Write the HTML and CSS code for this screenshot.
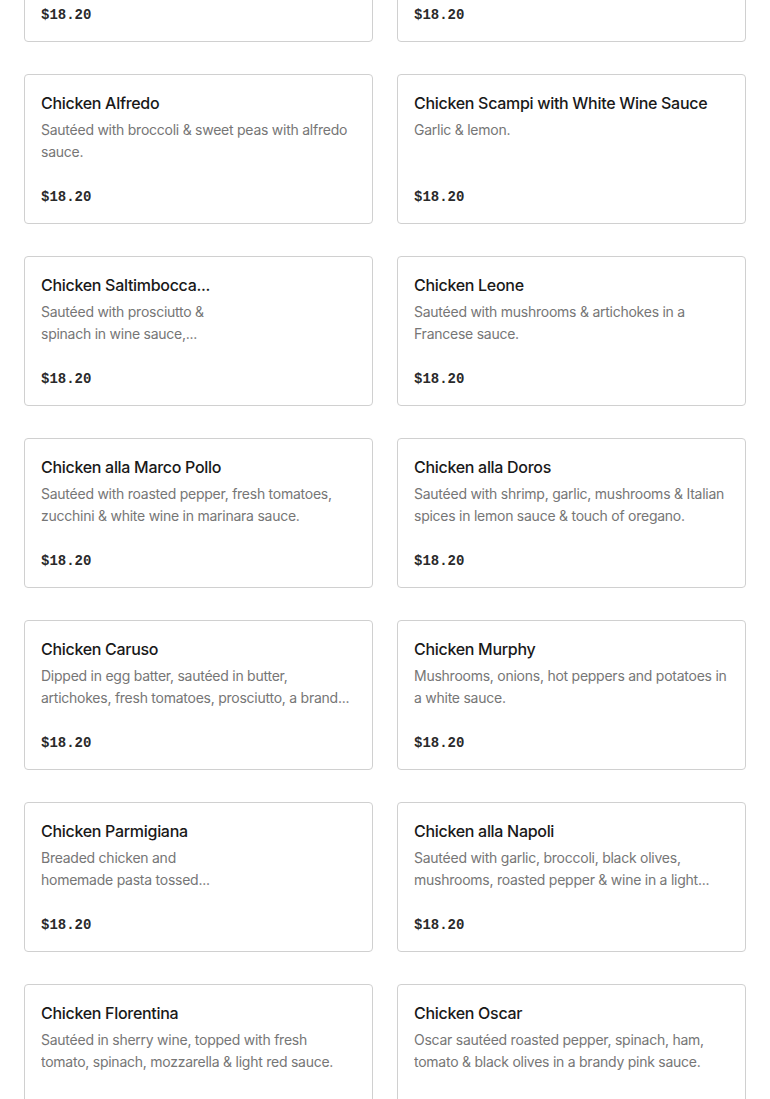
FILE: index.html
```html
<!DOCTYPE html>
<html lang="en">
<head>
<meta charset="utf-8">
<title>Menu</title>
<link rel="stylesheet" href="styles.css">
</head>
<body>
<main class="menu">
  <article class="card">
    <div class="info">
      <h3 class="name">Chicken Francese</h3>
      <p class="desc">Dipped in egg batter &amp; sautéed in lemon butter white wine sauce.</p>
      <div class="price">$18.20</div>
    </div>
  </article>
  <article class="card">
    <div class="info">
      <h3 class="name">Chicken Marsala</h3>
      <p class="desc">Sautéed with mushrooms in Marsala wine sauce.</p>
      <div class="price">$18.20</div>
    </div>
  </article>

  <article class="card">
    <div class="info">
      <h3 class="name">Chicken Alfredo</h3>
      <p class="desc">Sautéed with broccoli &amp; sweet peas with alfredo sauce.</p>
      <div class="price">$18.20</div>
    </div>
  </article>
  <article class="card">
    <div class="info">
      <h3 class="name">Chicken Scampi with White Wine Sauce</h3>
      <p class="desc">Garlic &amp; lemon.</p>
      <div class="price">$18.20</div>
    </div>
  </article>

  <article class="card card-media">
    <div class="info">
      <h3 class="name">Chicken Saltimbocca...</h3>
      <p class="desc">Sautéed with prosciutto &amp; spinach in wine sauce,...</p>
      <div class="price">$18.20</div>
    </div>
    <div class="media"></div>
  </article>
  <article class="card">
    <div class="info">
      <h3 class="name">Chicken Leone</h3>
      <p class="desc">Sautéed with mushrooms &amp; artichokes in a Francese sauce.</p>
      <div class="price">$18.20</div>
    </div>
  </article>

  <article class="card">
    <div class="info">
      <h3 class="name">Chicken alla Marco Pollo</h3>
      <p class="desc">Sautéed with roasted pepper, fresh tomatoes, zucchini &amp; white wine in marinara sauce.</p>
      <div class="price">$18.20</div>
    </div>
  </article>
  <article class="card">
    <div class="info">
      <h3 class="name">Chicken alla Doros</h3>
      <p class="desc">Sautéed with shrimp, garlic, mushrooms &amp; Italian spices in lemon sauce &amp; touch of oregano.</p>
      <div class="price">$18.20</div>
    </div>
  </article>

  <article class="card">
    <div class="info">
      <h3 class="name">Chicken Caruso</h3>
      <p class="desc">Dipped in egg batter, sautéed in butter, artichokes, fresh tomatoes, prosciutto, a brand...</p>
      <div class="price">$18.20</div>
    </div>
  </article>
  <article class="card">
    <div class="info">
      <h3 class="name">Chicken Murphy</h3>
      <p class="desc">Mushrooms, onions, hot peppers and potatoes in a white sauce.</p>
      <div class="price">$18.20</div>
    </div>
  </article>

  <article class="card card-media">
    <div class="info">
      <h3 class="name">Chicken Parmigiana</h3>
      <p class="desc">Breaded chicken and homemade pasta tossed...</p>
      <div class="price">$18.20</div>
    </div>
    <div class="media"></div>
  </article>
  <article class="card">
    <div class="info">
      <h3 class="name">Chicken alla Napoli</h3>
      <p class="desc">Sautéed with garlic, broccoli, black olives, mushrooms, roasted pepper &amp; wine in a light...</p>
      <div class="price">$18.20</div>
    </div>
  </article>

  <article class="card">
    <div class="info">
      <h3 class="name">Chicken Florentina</h3>
      <p class="desc">Sautéed in sherry wine, topped with fresh tomato, spinach, mozzarella &amp; light red sauce.</p>
      <div class="price">$18.20</div>
    </div>
  </article>
  <article class="card">
    <div class="info">
      <h3 class="name">Chicken Oscar</h3>
      <p class="desc">Oscar sautéed roasted pepper, spinach, ham, tomato &amp; black olives in a brandy pink sauce.</p>
      <div class="price">$18.20</div>
    </div>
  </article>
</main>
</body>
</html>
```
FILE: styles.css
```css
html, body {
  margin: 0;
  padding: 0;
  background: #ffffff;
  overflow: hidden;
}
body {
  font-family: Inter, "Noto Sans", sans-serif;
  color: #191919;
}
.menu {
  display: grid;
  grid-template-columns: 349px 349px;
  column-gap: 24px;
  row-gap: 32px;
  padding: 0 24px;
  margin-top: -108px;
}
.card {
  box-sizing: border-box;
  height: 150px;
  border: 1px solid #d0d0d0;
  border-radius: 4px;
  padding: 16px;
  display: flex;
  gap: 16px;
  background: #fff;
}
.info {
  flex: 1;
  min-width: 0;
  display: flex;
  flex-direction: column;
}
.card-media .info {
  flex: 0 0 190px;
}
.media {
  flex: 1;
}
.name {
  margin: 0;
  font-size: 16px;
  line-height: 24px;
  font-weight: 500;
  color: #191919;
  white-space: nowrap;
  overflow: hidden;
  text-overflow: ellipsis;
  letter-spacing: -0.3px;
}
.desc {
  margin: 4px 0 0;
  font-size: 14px;
  line-height: 22px;
  height: 44px;
  color: #767676;
  letter-spacing: -0.25px;
  overflow: hidden;
  display: -webkit-box;
  -webkit-line-clamp: 2;
  -webkit-box-orient: vertical;
}
.price {
  margin-top: 24px;
  font-family: "Liberation Mono", "DejaVu Sans Mono", monospace;
  font-weight: 700;
  font-size: 14px;
  line-height: 20px;
  color: #2a2a2a;
}
```
